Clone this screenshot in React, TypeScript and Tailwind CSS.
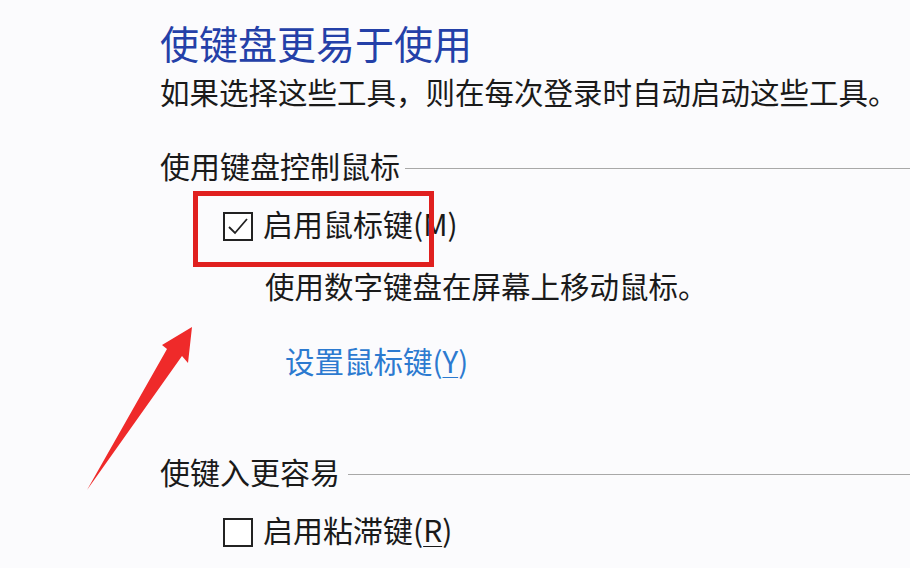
import React from "react";

const font = { fontFamily: '"Noto Sans CJK SC", "Noto Sans", sans-serif' };

function SectionHeader({ text, gap }: { text: string; gap: string }) {
  return (
    <div className="flex items-center h-[40px] leading-[40px] text-[30px] text-[#1a1a1a]">
      <span className="whitespace-nowrap">{text}</span>
      <div className={`flex-1 h-px bg-[#a8a8a8] mt-[6px] ${gap}`} />
    </div>
  );
}

function Checkbox({ checked, label, mnemonic, underline }: { checked?: boolean; label: string; mnemonic: string; underline?: boolean }) {
  return (
    <div className="flex items-center gap-[10px] pl-[63px] h-[40px] leading-[40px] text-[30px] text-[#1a1a1a]">
      <div className="w-[30px] h-[29px] shrink-0 border-2 border-[#222] bg-white mt-[6px] flex items-center justify-center">
        {checked && (
          <svg width="26" height="25" viewBox="0 0 26 25">
            <path d="M4 13 L10 19 L22 5" fill="none" stroke="#222" strokeWidth="1.8" />
          </svg>
        )}
      </div>
      <span className="whitespace-nowrap">
        {label}(
        <span className={underline ? "underline underline-offset-4 decoration-1" : ""}>{mnemonic}</span>)
      </span>
    </div>
  );
}

export default function App() {
  return (
    <div className="relative w-[910px] h-[568px] overflow-hidden bg-[#fbfbfd]" style={font}>
      <div className="pl-[160px] pt-[18px]">
        <h1 className="text-[39px] leading-[48px] text-[#2440a8] whitespace-nowrap">使键盘更易于使用</h1>
        <p className="mt-[5px] text-[29.5px] leading-[40px] text-[#1a1a1a] whitespace-nowrap">
          如果选择这些工具，则在每次登录时自动启动这些工具。
        </p>

        <div className="mt-[34px]">
          <SectionHeader text="使用键盘控制鼠标" gap="ml-[5px]" />
        </div>
        <div className="mt-[18px]">
          <Checkbox checked label="启用鼠标键" mnemonic="M" />
        </div>
        <p className="mt-[22px] pl-[105px] text-[29.5px] leading-[40px] text-[#1a1a1a] whitespace-nowrap">
          使用数字键盘在屏幕上移动鼠标。
        </p>
        <div className="mt-[35px] pl-[125px] text-[29.5px] leading-[40px] text-[#2c7ad0] whitespace-nowrap">
          设置鼠标键(<span className="underline underline-offset-4 decoration-1">Y</span>)
        </div>

        <div className="mt-[71px]">
          <SectionHeader text="使键入更容易" gap="ml-[8px]" />
        </div>
        <div className="mt-[18px]">
          <Checkbox label="启用粘滞键" mnemonic="R" underline />
        </div>
      </div>

      {/* annotation: red box */}
      <div className="absolute left-[193px] top-[191px] w-[241px] h-[76px] border-[5px] border-[#e0201f]" />

      {/* annotation: arrow */}
      <svg className="absolute left-0 top-0" width="910" height="568" viewBox="0 0 910 568">
        <path d="M192 327 L188 363 L182 356 L87 490 L167 349 L162 345 Z" fill="#ef2a2a" />
      </svg>
    </div>
  );
}
